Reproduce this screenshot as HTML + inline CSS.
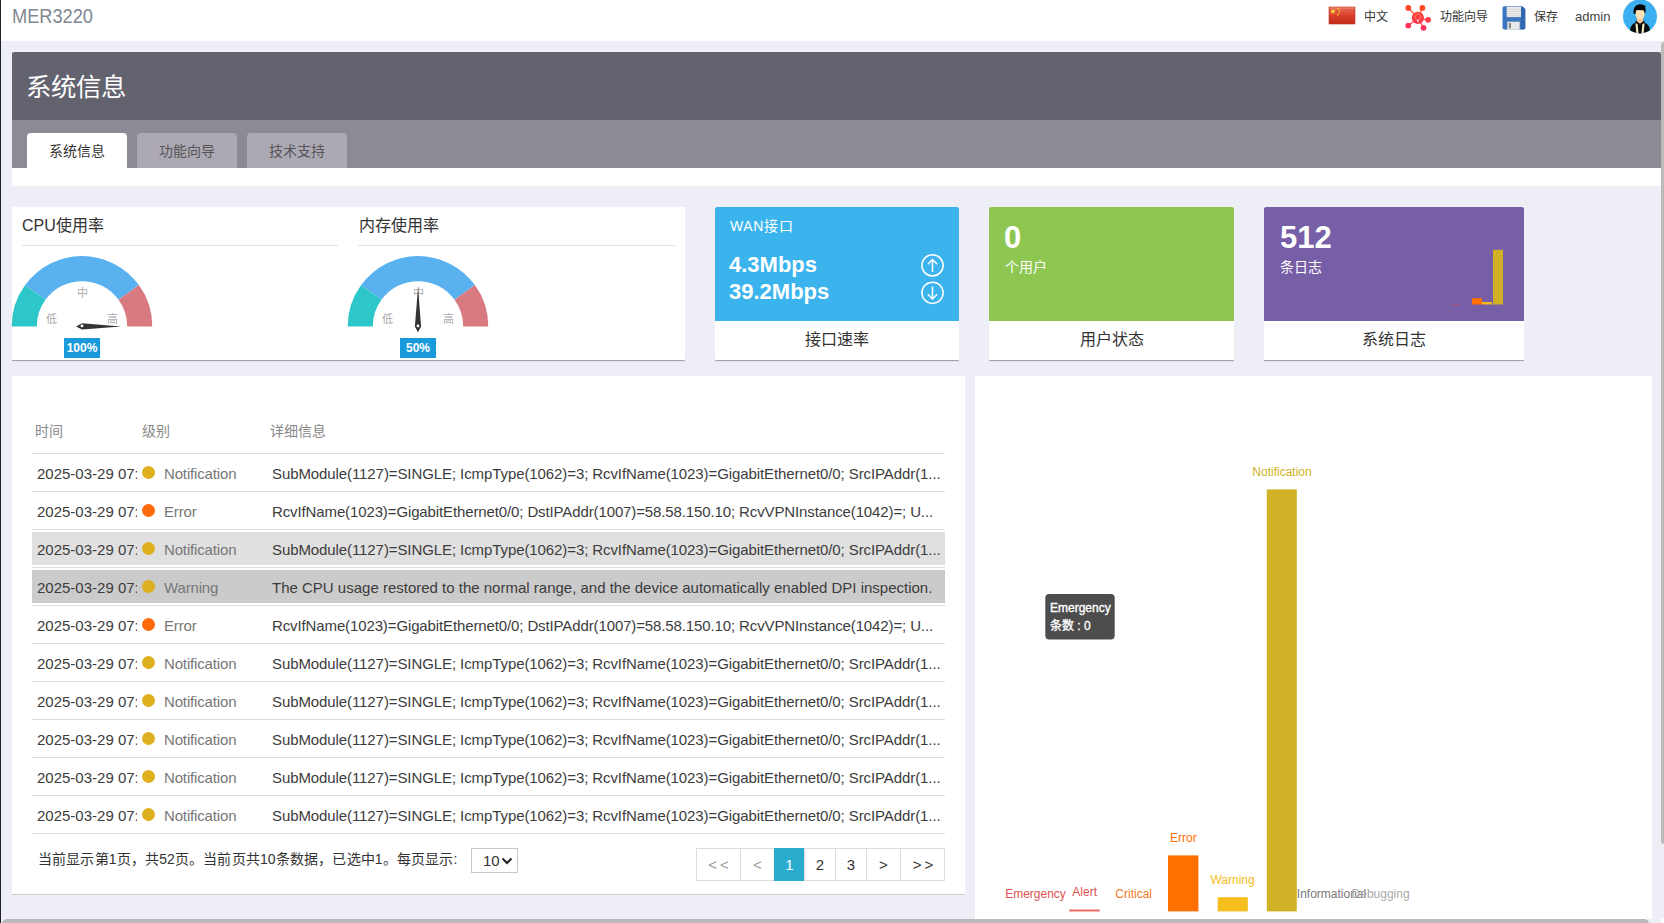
<!DOCTYPE html>
<html lang="zh-CN"><head><meta charset="utf-8">
<style>
*{box-sizing:border-box;margin:0;padding:0}
html,body{width:1664px;height:923px;overflow:hidden;background:#eeeef6;font-family:"Liberation Sans",sans-serif;color:#333}
.a{position:absolute}
#hdr{left:0;top:0;width:1664px;height:41px;background:#fff}
#lline{left:0;top:0;width:1px;height:923px;background:#1e2228}
#logo{left:12px;top:5px;font-size:20px;color:#7f8790;line-height:23px;transform:scaleX(0.91);transform-origin:0 0}
.ht{font-size:12px;color:#333;line-height:14px;top:10px}
#title{left:12px;top:52px;width:1649px;height:68px;background:#636370;border-radius:2px 2px 0 0}
#title span{position:absolute;left:14px;top:20px;font-size:25.4px;color:#fff;line-height:30px}
#tabbar{left:12px;top:120px;width:1649px;height:48px;background:#8d8a95}
.tab{top:13px;width:100px;height:35px;border-radius:4px 4px 0 0;background:#ada9b4;color:#555;font-size:14px;text-align:center;line-height:36px}
.tab.on{background:#fff;color:#333}
#tabwhite{left:12px;top:168px;width:1649px;height:18px;background:#fff}
.card{background:#fff;border-radius:1px;box-shadow:0 1px 0 #a3a3aa,0 2px 0 #e4e4ec}
.gt{font-size:16px;color:#333;line-height:19px}
.gl{height:1px;background:#e3e3e6}
.glab{font-size:11px;color:#aaa;line-height:12px}
.pct{width:36px;height:20px;background:#199bdb;color:#fff;font-weight:bold;font-size:12px;text-align:center;line-height:20px}
.stat{top:207px;height:153px}
.stat .top{position:absolute;left:0;top:0;right:0;height:114px;border-radius:2px 2px 0 0}
.stat .lab{position:absolute;left:0;right:0;top:121px;text-align:center;font-size:16px;color:#333;line-height:24px}
.wt{color:#fff}
table{border-collapse:collapse}
.row{left:32px;width:913px;height:38px;border-bottom:1px solid #ddd}
.row .bg{position:absolute;left:0;right:0;top:2px;height:33px}
.row .t{position:absolute;left:5px;top:11px;width:100px;overflow:hidden;white-space:nowrap;font-size:15px;color:#3c3c3c;line-height:18px}
.row .dot{position:absolute;left:110px;top:12px;width:13px;height:13px;border-radius:50%}
.row .lv{position:absolute;left:132px;top:11px;font-size:15px;color:#777;letter-spacing:-0.15px;line-height:18px}
.row .d{position:absolute;left:240px;top:11px;font-size:15px;color:#3c3c3c;line-height:18px;white-space:nowrap}
.pg{top:848px;height:33px;border:1px solid #ddd;border-right:none;text-align:center;line-height:31px;font-size:15px;color:#333}
.cl{font-size:12px;line-height:14px;white-space:nowrap}
</style></head><body>
<div class="a" id="hdr"></div>
<div class="a" id="lline"></div>
<div class="a" id="logo">MER3220</div>

<!-- header right -->
<svg class="a" style="left:1328px;top:6px" width="28" height="19" viewBox="0 0 28 19">
 <defs><linearGradient id="fg" x1="0" y1="0" x2="0" y2="1"><stop offset="0" stop-color="#e86a55"/><stop offset="0.5" stop-color="#d9402a"/><stop offset="1" stop-color="#c22d1c"/></linearGradient></defs>
 <rect x="1" y="1" width="26" height="17" fill="url(#fg)" stroke="#b8301f" stroke-width="0.6"/>
 <rect x="1.5" y="1.5" width="25" height="1" fill="#f39a88" opacity="0.7"/>
 <path d="M5,2.5 L5.75,4.55 L7.9,4.55 L6.2,5.85 L6.85,7.9 L5,6.6 L3.15,7.9 L3.8,5.85 L2.1,4.55 L4.25,4.55 Z" fill="#f8dd3a"/>
 <circle cx="9.65" cy="2.7" r="0.8" fill="#f8dd3a"/><circle cx="11.4" cy="4.5" r="0.8" fill="#f8dd3a"/><circle cx="11.1" cy="7" r="0.8" fill="#f8dd3a"/><circle cx="9.65" cy="8.8" r="0.8" fill="#f8dd3a"/>
</svg>
<div class="a ht" style="left:1364px">中文</div>
<svg class="a" style="left:1402px;top:3px" width="32" height="30" viewBox="0 0 32 30">
 <defs><linearGradient id="wg" gradientUnits="userSpaceOnUse" x1="0" y1="2" x2="0" y2="28"><stop offset="0" stop-color="#ff4a1a"/><stop offset="1" stop-color="#ff2f66"/></linearGradient></defs>
 <g fill="url(#wg)">
 <path d="M6.3,4.9 L16,15 L20.4,4.9 M16,15 L26.1,16.8 M16,15 L6.3,22.6 M16,15 L21.5,24.8" stroke="url(#wg)" stroke-width="1.2" fill="none"/>
 <circle cx="6.3" cy="4.9" r="2.9"/>
 <circle cx="20.4" cy="4.9" r="2.9"/>
 <circle cx="26.1" cy="16.8" r="2.9"/>
 <circle cx="6.3" cy="22.6" r="2.9"/>
 <circle cx="21.5" cy="24.8" r="2.9"/>
 <circle cx="15.9" cy="14.9" r="6.1"/>
 </g>
 <path d="M14.4,16.6 C13.5,15.8 13.1,14.8 13.2,13.6 C13.4,12 14.6,10.8 15.9,10.8 C17.2,10.8 18.4,12 18.6,13.6 C18.7,14.8 18.3,15.8 17.4,16.6 Z" fill="none" stroke="#ff9a9a" stroke-width="0.7"/>
 <rect x="15" y="17" width="1.9" height="1.8" fill="#ffd0d0"/>
</svg>
<div class="a ht" style="left:1440px">功能向导</div>
<svg class="a" style="left:1501px;top:5px" width="26" height="26" viewBox="0 0 26 26">
 <path d="M3.3,1.3 H21.5 L24.3,4.1 V22.8 a1.8,1.8 0 0 1 -1.8,1.8 H3.3 a1.8,1.8 0 0 1 -1.8,-1.8 V3.1 a1.8,1.8 0 0 1 1.8,-1.8 z" fill="#3b74bf"/>
 <path d="M22.5,2.3 L24.3,4.1 V22.8 a1.8,1.8 0 0 1 -1.8,1.8 H20 V2.3 z" fill="#2d5fa6" opacity="0.6"/>
 <rect x="5.7" y="1.8" width="14.3" height="10.3" fill="#eeeeee"/>
 <path d="M5.7,4.3 H20 M5.7,6.5 H20 M5.7,8.7 H20 M5.7,10.9 H20" stroke="#c4c4c4" stroke-width="0.6"/>
 <rect x="6.3" y="16.7" width="12.4" height="7.9" fill="#e8e8e8"/>
 <rect x="7.8" y="18" width="2.2" height="5.3" fill="#8a8a8a"/>
</svg>
<div class="a ht" style="left:1534px">保存</div>
<div class="a" style="left:1575px;top:9px;font-size:13px;color:#444;line-height:15px">admin</div>
<svg class="a" style="left:1622px;top:-1px" width="36" height="36" viewBox="0 0 36 36">
 <circle cx="18" cy="17.4" r="17" fill="#3bafef"/>
 <clipPath id="avc"><circle cx="18" cy="17.4" r="17"/></clipPath>
 <g clip-path="url(#avc)">
 <path d="M7.7,35 C7.8,28.5 9.5,25.2 13,24 L14.2,21.3 L16,23.2 h4 L21.8,21.3 L23,24 C26.5,25.2 28.3,28.5 28.4,35 Z" fill="#0d0d0d"/>
 <path d="M13.4,24.3 L15.6,25 L16.6,35 L14.4,35 Z M22.6,24.3 L20.4,25 L19.4,35 L21.6,35 Z" fill="#f3ecc4"/>
 <path d="M14.9,19 h6.2 v3.4 l-3.1,2.4 l-3.1,-2.4 z" fill="#f4c68e"/>
 <path d="M13.3,13 C13.3,17.6 15.1,20.6 18,20.6 C20.9,20.6 22.8,17.6 22.8,13 C22.8,10.6 20.9,9.6 18,9.6 C15.1,9.6 13.3,10.6 13.3,13 Z" fill="#fde1b3"/>
 <path d="M11.6,14.6 C11.1,9.6 13,6.1 17.5,5.3 C19.5,5 21.6,6 23.9,7.1 C23.1,7.8 22.9,8.5 23.6,10 C23.8,12 23.4,13.8 22.9,15 C22.6,13.2 22.1,12 21.4,11.3 L14.6,10.9 C13.9,11.9 13.6,13.3 13.4,15.2 Z" fill="#000"/>
 </g>
</svg>

<div class="a" id="title"><span>系统信息</span></div>
<div class="a" id="tabbar">
  <div class="a tab on" style="left:15px">系统信息</div>
  <div class="a tab" style="left:125px">功能向导</div>
  <div class="a tab" style="left:235px">技术支持</div>
</div>
<div class="a" id="tabwhite"></div>

<!-- gauge card -->
<div class="a card" style="left:12px;top:207px;width:673px;height:153px"></div>
<div class="a gt" style="left:22px;top:216px">CPU使用率</div>
<div class="a gl" style="left:22px;top:245px;width:316px"></div>
<div class="a gt" style="left:359px;top:216px">内存使用率</div>
<div class="a gl" style="left:358px;top:245px;width:317px"></div>

<svg class="a" style="left:0;top:0" width="700" height="370" viewBox="0 0 700 370"><path d="M11.70,326.40 A70.3,70.3 0 0,1 25.13,285.08 L45.43,299.83 A45.2,45.2 0 0,0 36.80,326.40 Z" fill="#2ec7c9"/><path d="M25.13,285.08 A70.3,70.3 0 0,1 138.87,285.08 L118.57,299.83 A45.2,45.2 0 0,0 45.43,299.83 Z" fill="#5ab1ef"/><path d="M138.87,285.08 A70.3,70.3 0 0,1 152.30,326.40 L127.20,326.40 A45.2,45.2 0 0,0 118.57,299.83 Z" fill="#d87a80"/><text x="82" y="296.8" font-size="11" fill="#aaa" text-anchor="middle">中</text><text x="51.5" y="323.4" font-size="11" fill="#aaa" text-anchor="middle">低</text><text x="112.5" y="323.4" font-size="11" fill="#aaa" text-anchor="middle">高</text><path d="M76.10,326.40 L82.00,329.50 L121.00,326.40 L82.00,323.30 Z" fill="#333"/><circle cx="82" cy="325.9" r="1.4" fill="#fff"/><path d="M347.70,326.40 A70.3,70.3 0 0,1 361.13,285.08 L381.43,299.83 A45.2,45.2 0 0,0 372.80,326.40 Z" fill="#2ec7c9"/><path d="M361.13,285.08 A70.3,70.3 0 0,1 474.87,285.08 L454.57,299.83 A45.2,45.2 0 0,0 381.43,299.83 Z" fill="#5ab1ef"/><path d="M474.87,285.08 A70.3,70.3 0 0,1 488.30,326.40 L463.20,326.40 A45.2,45.2 0 0,0 454.57,299.83 Z" fill="#d87a80"/><text x="418" y="296.8" font-size="11" fill="#aaa" text-anchor="middle">中</text><text x="387.5" y="323.4" font-size="11" fill="#aaa" text-anchor="middle">低</text><text x="448.5" y="323.4" font-size="11" fill="#aaa" text-anchor="middle">高</text><path d="M418.00,332.30 L421.10,326.40 L418.00,287.40 L414.90,326.40 Z" fill="#333"/><circle cx="418" cy="325.9" r="1.4" fill="#fff"/></svg><div class="a pct" style="left:64px;top:338px">100%</div><div class="a pct" style="left:400px;top:338px">50%</div>
<!-- stat cards -->
<div class="a card stat" style="left:715px;width:244px"><div class="top" style="background:#3bb4ee"></div><div class="lab">接口速率</div></div>
<div class="a card stat" style="left:989px;width:245px"><div class="top" style="background:#8dc751"></div><div class="lab">用户状态</div></div>
<div class="a card stat" style="left:1264px;width:260px"><div class="top" style="background:#775fa8"></div><div class="lab">系统日志</div></div>


<div class="a wt" style="left:730px;top:217px;font-size:14px;line-height:18px;letter-spacing:0.6px">WAN接口</div>
<div class="a wt" style="left:729px;top:251px;font-size:22px;font-weight:bold;line-height:27px">4.3Mbps</div>
<div class="a wt" style="left:729px;top:278px;font-size:22px;font-weight:bold;line-height:27px">39.2Mbps</div>
<svg class="a" style="left:915px;top:248px" width="36" height="62" viewBox="0 0 36 62">
 <circle cx="17.5" cy="17.4" r="10.6" fill="none" stroke="#fff" stroke-width="1.5"/>
 <path d="M17.5,11.5 V24 M12.8,16.2 L17.5,11.5 L22.2,16.2" fill="none" stroke="#fff" stroke-width="1.5"/>
 <circle cx="17.5" cy="44.8" r="10.6" fill="none" stroke="#fff" stroke-width="1.5"/>
 <path d="M17.5,38.5 V51 M12.8,46.3 L17.5,51 L22.2,46.3" fill="none" stroke="#fff" stroke-width="1.5"/>
</svg>
<div class="a wt" style="left:1004px;top:220px;font-size:31px;font-weight:bold;line-height:35px">0</div>
<div class="a wt" style="left:1005px;top:258px;font-size:14px;line-height:18px">个用户</div>
<div class="a wt" style="left:1280px;top:220px;font-size:31px;font-weight:bold;line-height:35px">512</div>
<div class="a wt" style="left:1280px;top:258px;font-size:14px;line-height:18px">条日志</div>
<svg class="a" style="left:1440px;top:240px" width="80" height="70" viewBox="0 0 80 70">
 <rect x="10.4" y="64" width="10" height="0.7" fill="#e0524f" opacity="0.6"/>
 <rect x="32" y="58.2" width="10" height="6.3" fill="#ff7000"/>
 <rect x="42" y="62" width="10" height="2.5" fill="#f5b81c"/>
 <rect x="53" y="9.8" width="10" height="54.7" fill="#d1b026"/>
</svg>

<!-- table card -->
<div class="a" style="left:12px;top:376px;width:953px;height:518px;background:#fff;box-shadow:0 1px 0 #cdcdd2"></div>

<div class="a" style="left:35px;top:423px;font-size:14px;color:#888;line-height:17px">时间</div>
<div class="a" style="left:142px;top:423px;font-size:14px;color:#888;line-height:17px">级别</div>
<div class="a" style="left:270px;top:423px;font-size:14px;color:#888;line-height:17px">详细信息</div>
<div class="a" style="left:32px;top:453px;width:913px;height:1px;background:#ddd"></div>
<div class="a row" style="top:454px"><div class="t">2025-03-29 07:55:12</div><div class="dot" style="background:#deb01f"></div><div class="lv">Notification</div><div class="d" style="letter-spacing:-0.09px">SubModule(1127)=SINGLE; IcmpType(1062)=3; RcvIfName(1023)=GigabitEthernet0/0; SrcIPAddr(1...</div></div>
<div class="a row" style="top:492px"><div class="t">2025-03-29 07:55:12</div><div class="dot" style="background:#ff6a0d"></div><div class="lv">Error</div><div class="d" style="letter-spacing:-0.12px">RcvIfName(1023)=GigabitEthernet0/0; DstIPAddr(1007)=58.58.150.10; RcvVPNInstance(1042)=; U...</div></div>
<div class="a row" style="top:530px"><div class="bg" style="background:#e0e0e0"></div><div class="t">2025-03-29 07:55:12</div><div class="dot" style="background:#deb01f"></div><div class="lv">Notification</div><div class="d" style="letter-spacing:-0.09px">SubModule(1127)=SINGLE; IcmpType(1062)=3; RcvIfName(1023)=GigabitEthernet0/0; SrcIPAddr(1...</div></div>
<div class="a row" style="top:568px"><div class="bg" style="background:#cbcbcb"></div><div class="t">2025-03-29 07:55:12</div><div class="dot" style="background:#deb01f"></div><div class="lv">Warning</div><div class="d">The CPU usage restored to the normal range, and the device automatically enabled DPI inspection.</div></div>
<div class="a row" style="top:606px"><div class="t">2025-03-29 07:55:12</div><div class="dot" style="background:#ff6a0d"></div><div class="lv">Error</div><div class="d" style="letter-spacing:-0.12px">RcvIfName(1023)=GigabitEthernet0/0; DstIPAddr(1007)=58.58.150.10; RcvVPNInstance(1042)=; U...</div></div>
<div class="a row" style="top:644px"><div class="t">2025-03-29 07:55:12</div><div class="dot" style="background:#deb01f"></div><div class="lv">Notification</div><div class="d" style="letter-spacing:-0.09px">SubModule(1127)=SINGLE; IcmpType(1062)=3; RcvIfName(1023)=GigabitEthernet0/0; SrcIPAddr(1...</div></div>
<div class="a row" style="top:682px"><div class="t">2025-03-29 07:55:12</div><div class="dot" style="background:#deb01f"></div><div class="lv">Notification</div><div class="d" style="letter-spacing:-0.09px">SubModule(1127)=SINGLE; IcmpType(1062)=3; RcvIfName(1023)=GigabitEthernet0/0; SrcIPAddr(1...</div></div>
<div class="a row" style="top:720px"><div class="t">2025-03-29 07:55:12</div><div class="dot" style="background:#deb01f"></div><div class="lv">Notification</div><div class="d" style="letter-spacing:-0.09px">SubModule(1127)=SINGLE; IcmpType(1062)=3; RcvIfName(1023)=GigabitEthernet0/0; SrcIPAddr(1...</div></div>
<div class="a row" style="top:758px"><div class="t">2025-03-29 07:55:12</div><div class="dot" style="background:#deb01f"></div><div class="lv">Notification</div><div class="d" style="letter-spacing:-0.09px">SubModule(1127)=SINGLE; IcmpType(1062)=3; RcvIfName(1023)=GigabitEthernet0/0; SrcIPAddr(1...</div></div>
<div class="a row" style="top:796px"><div class="t">2025-03-29 07:55:12</div><div class="dot" style="background:#deb01f"></div><div class="lv">Notification</div><div class="d" style="letter-spacing:-0.09px">SubModule(1127)=SINGLE; IcmpType(1062)=3; RcvIfName(1023)=GigabitEthernet0/0; SrcIPAddr(1...</div></div>

<div class="a" style="left:38px;top:851px;font-size:14px;color:#333;line-height:17px;white-space:nowrap;letter-spacing:0.15px">当前显示第1页，共52页。当前页共10条数据，已选中1。每页显示:</div>
<div class="a" style="left:471px;top:848px;width:47px;height:25px;border:1px solid #c8c8c8;border-radius:0;font-size:15px;line-height:24px;padding-left:11px;color:#333">10</div>
<svg class="a" style="left:500px;top:855px" width="14" height="12" viewBox="0 0 14 12"><path d="M2.5,3.5 L7,8 L11.5,3.5" fill="none" stroke="#222" stroke-width="2"/></svg>
<div class="a pg" style="left:696px;width:44px;color:#999;"><span style="letter-spacing:3px;margin-right:-3px">&lt;&lt;</span></div><div class="a pg" style="left:740px;width:34px;color:#999;">&lt;</div><div class="a pg" style="left:774px;width:30px;color:#fff;background:#2aaccf;border-color:#2aaccf;">1</div><div class="a pg" style="left:804px;width:31px;color:#333;">2</div><div class="a pg" style="left:835px;width:31px;color:#333;">3</div><div class="a pg" style="left:866px;width:34px;color:#333;">&gt;</div><div class="a pg" style="left:900px;width:45px;color:#333;"><span style="letter-spacing:3px;margin-right:-3px">&gt;&gt;</span></div><div class="a" style="left:944px;top:848px;width:1px;height:33px;background:#ddd"></div>

<!-- chart card -->
<div class="a" style="left:975px;top:376px;width:677px;height:543px;background:#fff"></div>


<svg class="a" style="left:975px;top:376px" width="677" height="547" viewBox="975 376 677 547">
 <g font-family="Liberation Sans" font-size="12">
 <text x="1035.5" y="897.5" fill="#e0524f" text-anchor="middle">Emergency</text>
 <text x="1084.7" y="895.6" fill="#e0524f" text-anchor="middle">Alert</text>
 <rect x="1069.3" y="909.5" width="30.4" height="2" fill="#e86a66"/>
 <text x="1133.7" y="897.5" fill="#f47a28" text-anchor="middle">Critical</text>
 <rect x="1168" y="855.4" width="30.4" height="56" fill="#ff7000"/>
 <text x="1183.4" y="842" fill="#ff7000" text-anchor="middle">Error</text>
 <rect x="1217.7" y="897.2" width="30.1" height="14.2" fill="#f5bd1e"/>
 <text x="1232.6" y="884" fill="#f5bd1e" text-anchor="middle">Warning</text>
 <rect x="1266.8" y="489.4" width="30" height="422" fill="#d0b226"/>
 <text x="1282" y="475.8" fill="#d0b226" text-anchor="middle">Notification</text>
 <text x="1331.5" y="897.5" fill="#777" text-anchor="middle">Informational</text>
 <text x="1380.6" y="897.5" fill="#aaa" text-anchor="middle">Debugging</text>
 <rect x="1045.3" y="594" width="69.4" height="45.4" rx="4" fill="#4d4d4d"/>
 <text x="1050" y="611.5" fill="#fff" stroke="#fff" stroke-width="0.35">Emergency</text>
 <text x="1050" y="629.5" fill="#fff" stroke="#fff" stroke-width="0.35">条数 : 0</text>
 </g>
</svg>

<!-- scrollbars -->
<div class="a" style="left:1661px;top:42px;width:3px;height:802px;background:#bbb;border-radius:3px 0 0 3px"></div>
<div class="a" style="left:2px;top:919px;width:1647px;height:10px;background:#b9b9b9;border-radius:5px"></div><div class="a" style="left:1661px;top:919px;width:3px;height:4px;background:#fff"></div>
</body></html>
